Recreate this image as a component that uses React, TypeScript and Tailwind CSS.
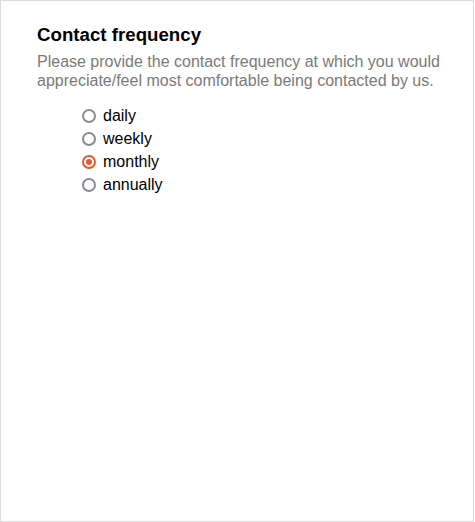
import React, { useState } from "react";

const options = ["daily", "weekly", "monthly", "annually"];

export default function App() {
	const [selected, setSelected] = useState("monthly");

	return (
		<div
			className="w-[474px] h-[522px] border border-[#dcdcdc] bg-white pl-[36px] pr-4 pt-[20px]"
			style={{ fontFamily: '"Liberation Sans", Arial, sans-serif' }}
		>
			<h2 className="text-[18.7px] leading-[28px] font-bold text-black">
				Contact frequency
			</h2>
			<p className="mt-[3px] text-[16px] leading-[19px] text-[#7a7a7a]">
				Please provide the contact frequency at which you would
				appreciate/feel most comfortable being contacted by us.
			</p>
			<div className="mt-[14px] ml-[45px] flex flex-col">
				{options.map((opt) => (
					<label
						key={opt}
						className="flex items-center h-[23px] cursor-pointer"
						onClick={() => setSelected(opt)}
					>
						<span
							className={
								selected === opt
									? "w-[14px] h-[14px] rounded-full border-2 border-[#e8582c] flex items-center justify-center"
									: "w-[14px] h-[14px] rounded-full border-2 border-[#8b8b96]"
							}
						>
							{selected === opt && (
								<span className="w-[6px] h-[6px] rounded-full bg-[#e8582c]" />
							)}
						</span>
						<span className="ml-[7px] text-[16px] text-black">{opt}</span>
					</label>
				))}
			</div>
		</div>
	);
}
